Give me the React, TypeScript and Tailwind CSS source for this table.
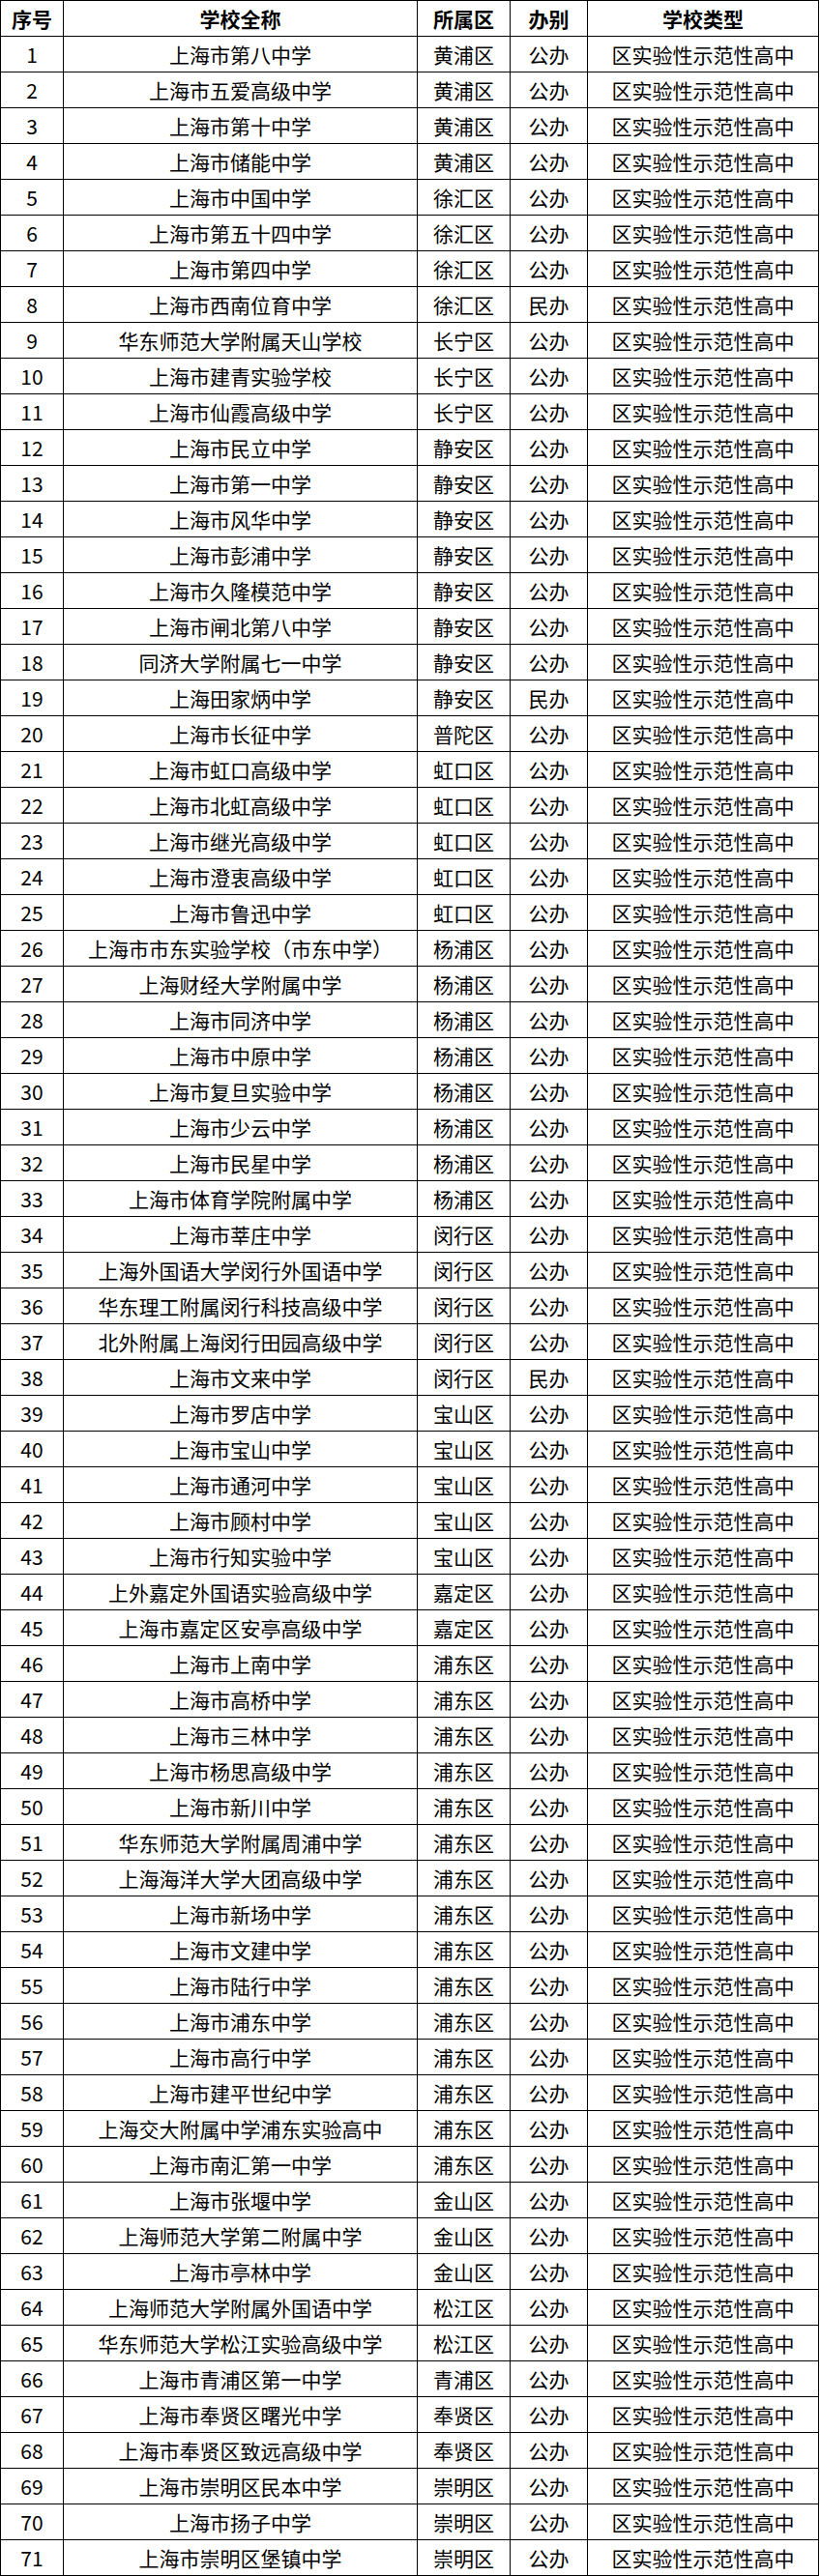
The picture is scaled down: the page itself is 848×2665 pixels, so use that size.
const rows: [string, string, string][] = [
  ["上海市第八中学", "黄浦区", "公办"],
  ["上海市五爱高级中学", "黄浦区", "公办"],
  ["上海市第十中学", "黄浦区", "公办"],
  ["上海市储能中学", "黄浦区", "公办"],
  ["上海市中国中学", "徐汇区", "公办"],
  ["上海市第五十四中学", "徐汇区", "公办"],
  ["上海市第四中学", "徐汇区", "公办"],
  ["上海市西南位育中学", "徐汇区", "民办"],
  ["华东师范大学附属天山学校", "长宁区", "公办"],
  ["上海市建青实验学校", "长宁区", "公办"],
  ["上海市仙霞高级中学", "长宁区", "公办"],
  ["上海市民立中学", "静安区", "公办"],
  ["上海市第一中学", "静安区", "公办"],
  ["上海市风华中学", "静安区", "公办"],
  ["上海市彭浦中学", "静安区", "公办"],
  ["上海市久隆模范中学", "静安区", "公办"],
  ["上海市闸北第八中学", "静安区", "公办"],
  ["同济大学附属七一中学", "静安区", "公办"],
  ["上海田家炳中学", "静安区", "民办"],
  ["上海市长征中学", "普陀区", "公办"],
  ["上海市虹口高级中学", "虹口区", "公办"],
  ["上海市北虹高级中学", "虹口区", "公办"],
  ["上海市继光高级中学", "虹口区", "公办"],
  ["上海市澄衷高级中学", "虹口区", "公办"],
  ["上海市鲁迅中学", "虹口区", "公办"],
  ["上海市市东实验学校（市东中学）", "杨浦区", "公办"],
  ["上海财经大学附属中学", "杨浦区", "公办"],
  ["上海市同济中学", "杨浦区", "公办"],
  ["上海市中原中学", "杨浦区", "公办"],
  ["上海市复旦实验中学", "杨浦区", "公办"],
  ["上海市少云中学", "杨浦区", "公办"],
  ["上海市民星中学", "杨浦区", "公办"],
  ["上海市体育学院附属中学", "杨浦区", "公办"],
  ["上海市莘庄中学", "闵行区", "公办"],
  ["上海外国语大学闵行外国语中学", "闵行区", "公办"],
  ["华东理工附属闵行科技高级中学", "闵行区", "公办"],
  ["北外附属上海闵行田园高级中学", "闵行区", "公办"],
  ["上海市文来中学", "闵行区", "民办"],
  ["上海市罗店中学", "宝山区", "公办"],
  ["上海市宝山中学", "宝山区", "公办"],
  ["上海市通河中学", "宝山区", "公办"],
  ["上海市顾村中学", "宝山区", "公办"],
  ["上海市行知实验中学", "宝山区", "公办"],
  ["上外嘉定外国语实验高级中学", "嘉定区", "公办"],
  ["上海市嘉定区安亭高级中学", "嘉定区", "公办"],
  ["上海市上南中学", "浦东区", "公办"],
  ["上海市高桥中学", "浦东区", "公办"],
  ["上海市三林中学", "浦东区", "公办"],
  ["上海市杨思高级中学", "浦东区", "公办"],
  ["上海市新川中学", "浦东区", "公办"],
  ["华东师范大学附属周浦中学", "浦东区", "公办"],
  ["上海海洋大学大团高级中学", "浦东区", "公办"],
  ["上海市新场中学", "浦东区", "公办"],
  ["上海市文建中学", "浦东区", "公办"],
  ["上海市陆行中学", "浦东区", "公办"],
  ["上海市浦东中学", "浦东区", "公办"],
  ["上海市高行中学", "浦东区", "公办"],
  ["上海市建平世纪中学", "浦东区", "公办"],
  ["上海交大附属中学浦东实验高中", "浦东区", "公办"],
  ["上海市南汇第一中学", "浦东区", "公办"],
  ["上海市张堰中学", "金山区", "公办"],
  ["上海师范大学第二附属中学", "金山区", "公办"],
  ["上海市亭林中学", "金山区", "公办"],
  ["上海师范大学附属外国语中学", "松江区", "公办"],
  ["华东师范大学松江实验高级中学", "松江区", "公办"],
  ["上海市青浦区第一中学", "青浦区", "公办"],
  ["上海市奉贤区曙光中学", "奉贤区", "公办"],
  ["上海市奉贤区致远高级中学", "奉贤区", "公办"],
  ["上海市崇明区民本中学", "崇明区", "公办"],
  ["上海市扬子中学", "崇明区", "公办"],
  ["上海市崇明区堡镇中学", "崇明区", "公办"],
];

const cell =
  "h-[37px] flex items-center justify-center border-r border-b border-black whitespace-nowrap overflow-hidden";

function Row({ cells, bold }: { cells: string[]; bold?: boolean }) {
  return (
    <>
      {cells.map((c, i) => (
        <div key={i} className={cell + (bold ? " font-bold" : "")}>
          {c}
        </div>
      ))}
    </>
  );
}

export default function App() {
  return (
    <div className="bg-white w-[848px] h-[2665px] text-black text-[21px] leading-none font-['Noto_Sans_CJK_SC','Noto_Sans',sans-serif]">
      <div className="w-[847px] grid grid-cols-[65px_366px_96px_80px_239px] border-l border-t border-black">
        <Row bold cells={["序号", "学校全称", "所属区", "办别", "学校类型"]} />
        {rows.map((r, i) => (
          <Row key={i} cells={[String(i + 1), r[0], r[1], r[2], "区实验性示范性高中"]} />
        ))}
      </div>
    </div>
  );
}
